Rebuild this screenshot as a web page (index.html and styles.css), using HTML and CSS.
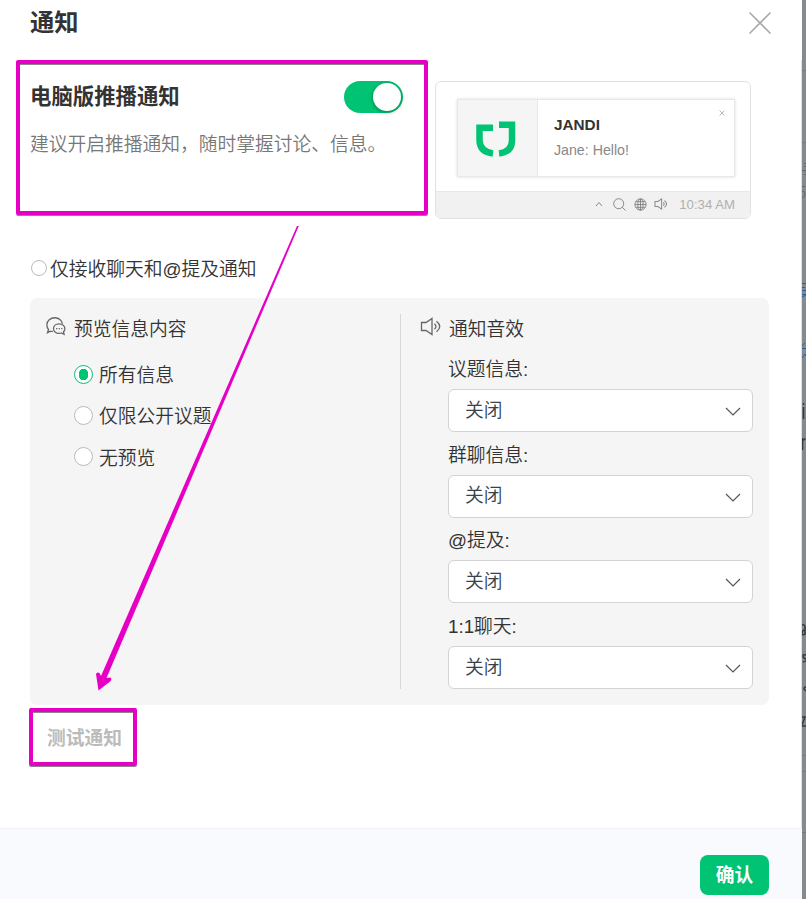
FILE: index.html
```html
<!DOCTYPE html>
<html lang="zh-CN">
<head>
  <meta charset="utf-8">
  <meta name="viewport" content="width=device-width">
  <title>通知</title>
  <link rel="stylesheet" href="styles.css">
</head>
<body>
  <div class="page">
    <section class="modal">
      <header class="modal-header">
        <h1>通知</h1>
        <svg class="close" width="24" height="24" viewBox="0 0 24 24"><path d="M1.5 1.5l21 21M22.5 1.5l-21 21"/></svg>
      </header>
      <div class="modal-body">
        <div class="push">
          <div class="push-info">
            <div class="push-head">
              <h2>电脑版推播通知</h2>
              <div class="switch"><span class="knob"></span></div>
            </div>
            <p>建议开启推播通知，随时掌握讨论、信息。</p>
          </div>
          <div class="preview">
            <div class="preview-screen">
              <div class="toast">
                <div class="toast-logo">
                  <svg width="40" height="36" viewBox="0 0 40 36"><path d="M17 6.700H3.500V19.500Q4 31 17 32.400M23 3.700H36V19.500Q36 31 23 32.400"/></svg>
                </div>
                <div class="toast-text">
                  <strong>JANDI</strong>
                  <span>Jane: Hello!</span>
                </div>
                <svg class="toast-close" width="6" height="6" viewBox="0 0 6 6"><path d="M.5 .5l5 5M5.500 .5l-5 5"/></svg>
              </div>
            </div>
            <div class="taskbar">
              <svg width="8" height="6" viewBox="0 0 8 6"><path d="M1 5l3-3.500 3 3.500"/></svg>
              <svg width="13" height="13" viewBox="0 0 13 13"><circle cx="5.700" cy="5.700" r="5"/><path d="M9.300 9.300l3.200 3.200"/></svg>
              <svg width="13" height="13" viewBox="0 0 13 13"><circle cx="6.500" cy="6.500" r="5.600"/><ellipse cx="6.500" cy="6.500" rx="2.700" ry="5.600"/><path d="M6.500 1v11M1 6.500h11M1.800 3.700h9.400M1.800 9.300h9.400"/></svg>
              <svg width="14" height="12" viewBox="0 0 22 19"><use href="#speaker"/></svg>
              <span class="time">10:34 AM</span>
            </div>
          </div>
        </div>

        <div class="only-chat"><span class="radio small"></span>仅接收聊天和@提及通知</div>

        <div class="panel">
          <div class="panel-left">
            <div class="panel-title">
              <svg class="icon" width="20" height="19" viewBox="0 0 20 19"><path d="M4.500 14.200L1.500 15.700 2.500 12.500C.2 9.800.3 5.300 3.200 2.800 6.600-.1 12.100.1 14.800 3.300 15.700 4.400 16.300 5.500 16.400 6.700M4.500 14.200L6.800 14.600M13 6.800c-3.200 0-5.500 2.100-5.500 4.800s2.300 4.800 5.500 4.800c.8 0 1.600-.1 2.300-.4l2.800 1.400-.6-2.600c.9-.8 1.400-1.900 1.400-3.200 0-2.700-2.600-4.800-5.900-4.800zM10 11.700h1.300M12.600 11.700h1.300M15.200 11.700h1.300"/></svg>
              预览信息内容
            </div>
            <div class="option"><span class="radio checked"></span>所有信息</div>
            <div class="option"><span class="radio"></span>仅限公开议题</div>
            <div class="option"><span class="radio"></span>无预览</div>
          </div>
          <div class="panel-right">
            <div class="panel-title">
              <svg class="icon" width="22" height="19" viewBox="0 0 22 19"><g id="speaker"><path d="M1.500 5.500h4.500L12 1.500v16L6 13.500H1.500zM14.500 6.800q3 2.700 0 5.400M16.500 4.300q6.500 5.200 0 10.400"/></g></svg>
              通知音效
            </div>
            <div class="field">
              <label>议题信息:</label>
              <div class="select">关闭<svg width="16" height="9" viewBox="0 0 16 9"><path d="M1 1l7 7 7-7"/></svg></div>
            </div>
            <div class="field">
              <label>群聊信息:</label>
              <div class="select">关闭<svg width="16" height="9" viewBox="0 0 16 9"><path d="M1 1l7 7 7-7"/></svg></div>
            </div>
            <div class="field">
              <label>@提及:</label>
              <div class="select">关闭<svg width="16" height="9" viewBox="0 0 16 9"><path d="M1 1l7 7 7-7"/></svg></div>
            </div>
            <div class="field">
              <label>1:1聊天:</label>
              <div class="select">关闭<svg width="16" height="9" viewBox="0 0 16 9"><path d="M1 1l7 7 7-7"/></svg></div>
            </div>
          </div>
        </div>
        <div class="test">测试通知</div>
      </div>
      <footer class="modal-footer">
        <button class="confirm">确认</button>
      </footer>
    </section>

    <!-- page behind the dialog -->
    <svg class="behind" width="4" height="899" viewBox="0 0 4 899">
      <path class="rule" d="M0 70.500h4M0 142.500h4M0 755.500h4M0 771.500h4M0 832.500h4"/>
      <path class="gray" d="M2 163.500h2M2 166.500h2M0 170.500h4M2 174.500h2M0 186.500h3M0 191q3 0 3 3t-3 4"/>
      <path class="blue" d="M0 283.500h4M0 287.500h3M0 290.500h4M0 294.500h4M0 297l4-2M0 346l3-3M0 348.500h4M0 358l3-4 1 2"/>
      <path class="dark" d="M1.500 407v12M1.500 403v2M.5 438v12M.5 441q1-2 3-2M0 625q3-1 3 2v8M3 630q-3 0-3 3t3 1M4 655q-3-1-3 1t3 3-3 3M4 687q-2 0-2 2l2 2M0 717h3l-3 8M0 726h4"/>
    </svg>

    <div class="mark mark-push"></div>
    <div class="mark mark-test"></div>
    <svg class="arrow" width="806" height="899" viewBox="0 0 806 899"><path d="M297 226L298.800 226 106.500 678 110.500 677.500Q112.500 680 109.500 682L98.500 690.500 96 674Q97 671.500 99.500 673L101 676Z"/></svg>
  </div>
</body>
</html>
```

FILE: styles.css
```css
* {
  box-sizing: border-box;
}
body {
  margin: 0;
  font-family: "Liberation Sans", "Noto Sans CJK SC", sans-serif;
  font-size: 18.75px;
  font-weight: 350;
  color: #333;
}
h1, h2, p {
  margin: 0;
}
svg {
  display: block;
  flex: none;
  fill: none;
}

.page {
  position: relative;
  display: flex;
  width: 806px;
  height: 899px;
  overflow: hidden;
  background: #848b8f;
}
.modal {
  display: flex;
  flex-direction: column;
  width: 802px;
  background: #fff;
}
.modal-header {
  display: flex;
  justify-content: space-between;
  height: 60px;
  padding: 5px 30px 0;
}
.modal-header h1 {
  font-size: 24.3px;
  line-height: 36px;
}
.close {
  margin-top: 6px;
  stroke: #aaa;
  stroke-width: 1.6;
}
.modal-body {
  flex: 1;
  padding: 21px 32px 0 30px;
  border-right: 1px solid #dfe1e3;
}

.push {
  display: flex;
  justify-content: space-between;
  height: 138px;
  padding-right: 18px;
}
.push-info {
  width: 373px;
}
.push-head {
  display: flex;
  justify-content: space-between;
  align-items: center;
  height: 32px;
}
.push-head h2 {
  font-size: 21.4px;
  line-height: 30px;
}
.switch {
  display: flex;
  justify-content: flex-end;
  width: 59px;
  height: 32px;
  padding: 2px;
  border-radius: 16px;
  background: #00c473;
}
.knob {
  width: 28px;
  height: 28px;
  border-radius: 50%;
  background: #fff;
  box-shadow: 0 1px 4px rgba(0, 0, 0, .35);
}
.push-info p {
  margin-top: 18px;
  line-height: 28px;
  color: #777;
  white-space: nowrap;
}

.preview {
  display: flex;
  flex-direction: column;
  width: 316px;
  height: 138px;
  border: 1px solid #e2e2e2;
  border-radius: 6px;
  overflow: hidden;
}
.preview-screen {
  flex: 1;
  padding: 17px 15px 0 21px;
}
.toast {
  position: relative;
  display: flex;
  height: 78px;
  border: 1px solid #e8e8e8;
  box-shadow: 0 0 3px rgba(0, 0, 0, .14);
}
.toast-logo {
  display: flex;
  align-items: center;
  justify-content: center;
  width: 80px;
  background: #f5f5f5;
  border-right: 1px solid #e8e8e8;
}
.toast-logo svg {
  margin: 2px 0 0 -4px;
  stroke: #00c473;
  stroke-width: 6.5;
}
.toast-text {
  display: flex;
  flex-direction: column;
  padding: 15px 0 0 16px;
  font-size: 14.2px;
  line-height: 20px;
}
.toast-text strong {
  font-size: 15.3px;
  font-weight: bold;
}
.toast-text span {
  margin-top: 5px;
  color: #888;
}
.toast-close {
  position: absolute;
  top: 10px;
  right: 9px;
  stroke: #aaa;
  stroke-width: .8;
}
.taskbar {
  display: flex;
  align-items: center;
  justify-content: flex-end;
  gap: 8px;
  height: 27px;
  padding: 0 15px 2px 0;
  border-top: 1px solid #e8e8e8;
  background: #f1f1f1;
}
.taskbar svg {
  stroke: #888;
  stroke-width: 1;
}
.taskbar svg:nth-of-type(1) {
  margin-right: 2px;
}
.taskbar svg:nth-of-type(4) {
  margin-left: -1px;
  stroke-width: 1.6;
}
.time {
  margin-left: 3px;
  font-size: 13.2px;
  color: #b0b0b0;
}

.only-chat {
  display: flex;
  align-items: center;
  height: 28px;
  margin-top: 34px;
  margin-bottom: 17px;
}
.radio {
  flex: none;
  width: 19px;
  height: 19px;
  margin-right: 6px;
  border: 1px solid #bbb;
  border-radius: 50%;
  background: #fff;
}
.radio.small {
  width: 16px;
  height: 16px;
  margin: 2px 3px 0 1px;
}
.radio.checked {
  border: 1px solid #00c473;
  background: radial-gradient(5px 6px, #00c473 92%, #fff 100%);
}

.panel {
  display: flex;
  height: 407px;
  padding: 16px;
  border-radius: 7px;
  background: #f5f5f5;
}
.panel-left {
  width: 355px;
  border-right: 1px solid #d8d8d8;
}
.panel-title {
  display: flex;
  align-items: center;
  gap: 8px;
  height: 27px;
}
.icon {
  margin-top: -2px;
  stroke: #666;
  stroke-width: 1.3;
}
.option {
  display: flex;
  align-items: center;
  height: 28px;
  margin: 0 0 13.300px 28px;
}
.option .radio {
  margin-top: 1px;
}
.panel-left .panel-title {
  margin: 0 0 18.500px;
}
.panel-right {
  flex: 1;
  padding-left: 19px;
}
.panel-right .panel-title {
  gap: 7px;
  margin-bottom: 14px;
}
.field {
  margin-left: 28px;
  padding-bottom: 8.700px;
}
.field label {
  display: block;
  height: 34px;
  padding-top: 1px;
  line-height: 28px;
}
.select {
  display: flex;
  align-items: center;
  justify-content: space-between;
  height: 43px;
  padding: 0 11px 5px 16px;
  border: 1px solid #d3d3d3;
  border-radius: 6px;
  background: #fff;
  color: #38424a;
}
.select svg {
  margin-top: 7px;
  stroke: #555;
  stroke-width: 1.2;
}
.test {
  padding: 20px 17px 0;
  line-height: 28px;
  font-weight: bold;
  color: #bbb;
}
.modal-footer {
  display: flex;
  justify-content: flex-end;
  height: 71px;
  padding: 26px 33px 0;
  border-top: 1px solid #eff1f8;
  background: #f9fafe;
}
.confirm {
  width: 69px;
  height: 40px;
  padding: 0 0 3px;
  border: none;
  border-radius: 8px;
  background: #00c473;
  color: #fff;
  font: bold 18.75px "Liberation Sans", "Noto Sans CJK SC", sans-serif;
}

.behind .rule {
  stroke: #747b7f;
}
.behind .gray {
  stroke: #62686b;
}
.behind .blue {
  stroke: #2c5ba6;
}
.behind .dark {
  stroke: #333b40;
  stroke-width: 1.5;
}

/* highlights */
.mark {
  position: absolute;
  border: 4px solid #e600c6;
  border-radius: 2px;
  box-shadow: 0 1px 0 #888, inset 0 1px 0 #888;
}
.mark-push {
  top: 60px;
  left: 16px;
  width: 412px;
  height: 155px;
}
.mark-test {
  top: 708px;
  left: 29px;
  width: 108px;
  height: 58px;
}
.arrow {
  position: absolute;
  top: 0;
  left: 0;
  fill: #e600c6;
}
```
